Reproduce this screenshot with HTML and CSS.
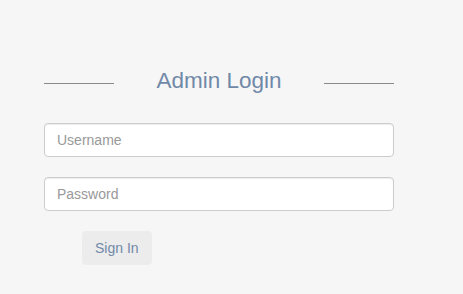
FILE: index.html
```html
<!DOCTYPE html>
<html>
<head>
<meta charset="utf-8">
<link rel="stylesheet" href="styles.css">
</head>
<body>
<main class="login">
  <div class="login-head">
    <span class="rule"></span>
    <h1 class="title">Admin Login</h1>
    <span class="rule"></span>
  </div>
  <form class="login-form">
    <input class="field" type="text" placeholder="Username">
    <input class="field" type="password" placeholder="Password">
    <button class="btn" type="button">Sign In</button>
  </form>
</main>
</body>
</html>
```
FILE: styles.css
```css
html, body {
  margin: 0;
  padding: 0;
  background: #f6f6f6;
  font-family: "Liberation Sans", Arial, sans-serif;
}
.login {
  width: 350px;
  padding: 66px 0 0 44px;
}
.login-head {
  display: grid;
  grid-template-columns: 70px 1fr 70px;
  height: 30px;
}
.rule {
  display: block;
  height: 1px;
  margin-top: 17px;
  background: #8a8a8a;
}
.title {
  margin: 0;
  font-size: 22.5px;
  line-height: 30px;
  font-weight: normal;
  text-align: center;
  color: #7189a8;
}
.login-form {
  display: flex;
  flex-direction: column;
  align-items: flex-start;
  gap: 20px;
  margin-top: 27px;
}
.field {
  box-sizing: border-box;
  width: 350px;
  height: 34px;
  padding: 6px 12px;
  font-family: inherit;
  font-size: 14px;
  border: 1px solid #ccc;
  border-radius: 4px;
  background: #fff;
  box-shadow: inset 0 1px 1px rgba(0,0,0,.075);
  outline: none;
}
.field::placeholder {
  color: #999;
}
.btn {
  margin-left: 38px;
  height: 34px;
  padding: 6px 12px;
  font-family: inherit;
  font-size: 14px;
  line-height: 20px;
  color: #7189a8;
  background: #ececec;
  border: 1px solid #ececec;
  border-radius: 4px;
}
```
